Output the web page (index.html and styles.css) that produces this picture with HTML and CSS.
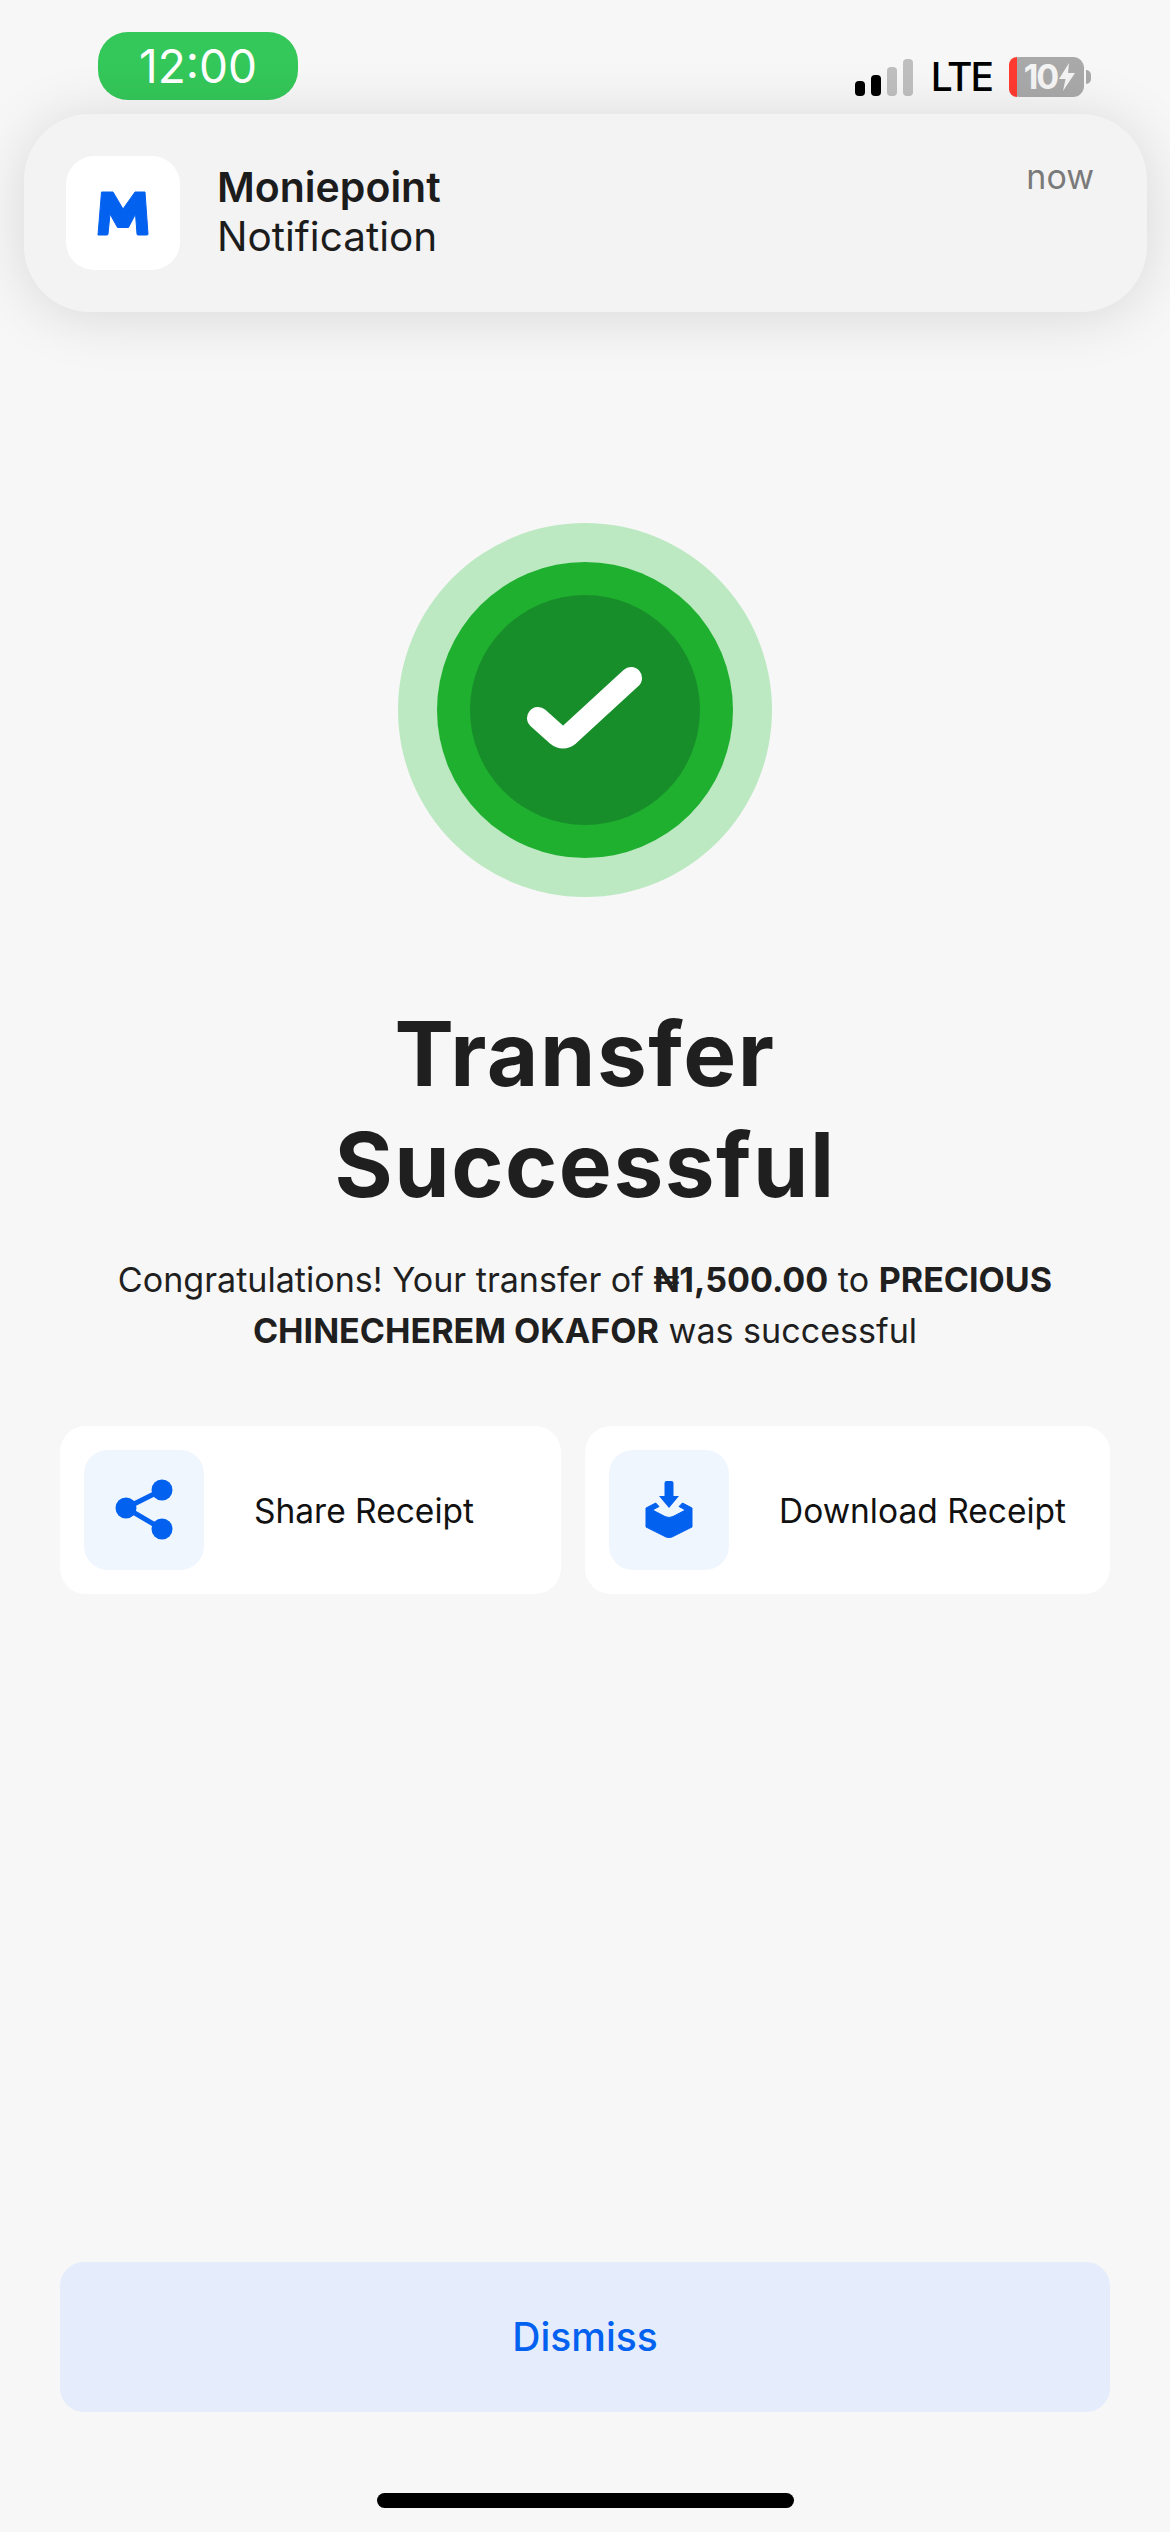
FILE: index.html
```html
<!DOCTYPE html>
<html lang="en">
<head>
    <meta charset="UTF-8">
    <meta name="viewport" content="width=device-width, initial-scale=1.0">
    <title>Transfer Successful</title>
    <link rel="stylesheet" href="styles.css">
</head>
<body>
    <div class="screen">

        <div class="status">
            <div class="time">12:00</div>
            <div class="status-right">
                <div class="signal">
                    <span class="bar bar-1"></span>
                    <span class="bar bar-2"></span>
                    <span class="bar bar-3"></span>
                    <span class="bar bar-4"></span>
                </div>
                <div class="lte">LTE</div>
                <div class="battery">
                    <div class="battery-body">
                        <span class="battery-low"></span>
                        <span class="battery-num">10</span>
                        <svg class="battery-bolt" width="18" height="28" viewBox="0 0 18 28">
                            <path d="M11 0 L1 16 H7.5 L5 28 L17 10 H10 Z" fill="#f4f4f4"/>
                        </svg>
                    </div>
                    <span class="battery-nub"></span>
                </div>
            </div>
        </div>

        <div class="banner">
            <div class="app-icon">
                <svg width="52" height="45" viewBox="0 0 52 45">
                    <path d="M4.5 1 H16 L26 18 L38 1 H48 L51 43 Q51 44 50 44 H41 Q40 44 40 43 L38.500 23 L31.500 36.500 H20.500 L13 23 L11 43 Q11 44 10 44 H1 Z" fill="#0361f0" stroke="#0361f0" stroke-width="1" stroke-linejoin="round"/>
                </svg>
            </div>
            <div class="banner-text">
                <div class="banner-title">Moniepoint</div>
                <div class="banner-sub">Notification</div>
            </div>
            <div class="banner-time">now</div>
        </div>

        <div class="content">
            <div class="ring-outer">
                <div class="ring-mid">
                    <div class="ring-inner">
                        <svg width="120" height="100" viewBox="0 0 120 100">
                            <path d="M13 58 L32 75 Q38 80 44 75 L106 18" fill="none" stroke="#fff" stroke-width="22" stroke-linecap="round" stroke-linejoin="round"/>
                        </svg>
                    </div>
                </div>
            </div>

            <h1 class="heading">Transfer<br>Successful</h1>

            <p class="message">Congratulations! Your transfer of <b>₦1,500.00</b> to <b>PRECIOUS<br>CHINECHEREM OKAFOR</b> was successful</p>

            <div class="actions">
                <div class="action">
                    <div class="action-icon">
                        <svg width="58" height="62" viewBox="0 0 58 62">
                            <path d="M47 11 L11 29 L47 50" fill="none" stroke="#0361f0" stroke-width="5"/>
                            <circle cx="47" cy="11" r="10.500" fill="#0361f0"/>
                            <circle cx="11" cy="29" r="10.500" fill="#0361f0"/>
                            <circle cx="47" cy="50" r="10.500" fill="#0361f0"/>
                        </svg>
                    </div>
                    <span class="action-label">Share Receipt</span>
                </div>
                <div class="action">
                    <div class="action-icon">
                        <svg width="48" height="58" viewBox="0 0 48 58">
                            <path d="M19.500 2 Q19.500 0 21.500 0 H26.500 Q28.500 0 28.500 2 V15 H34 L24 27 L14 15 H19.500 Z" fill="#0361f0"/>
                            <path d="M1 27 L10.700 22 L14 25.500 L7.500 29 L20 35.500 Q24 37.500 28 35.500 L40.500 29 L34 25.500 L37.500 22 L47 27 V46 L27 56 Q24 57 21 56 L1 46 Z" fill="#0361f0" stroke="#0361f0" stroke-width="1" stroke-linejoin="round"/>
                        </svg>
                    </div>
                    <span class="action-label">Download Receipt</span>
                </div>
            </div>
        </div>

        <div class="footer">
            <div class="dismiss">Dismiss</div>
            <div class="home-bar"></div>
        </div>

    </div>
</body>
</html>
```

FILE: styles.css
```css
body, div, h1, p {
  margin: 0;
  padding: 0;
}

body {
  background: #f7f7f7;
  font-family: Inter, "Noto Sans", sans-serif;
  color: #1f1f1f;
}

.screen {
  position: relative;
  width: 1170px;
  height: 2532px;
  display: flex;
  flex-direction: column;
  overflow: hidden;
}

/* status bar */
.status {
  display: flex;
  justify-content: space-between;
  align-items: flex-start;
  height: 100px;
  padding: 32px 79px 0 98px;
  box-sizing: border-box;
}

.time {
  width: 200px;
  height: 68px;
  background: #34c759;
  border-radius: 30px;
  color: #fff;
  font-size: 46px;
  line-height: 68px;
  text-align: center;
}

.status-right {
  display: flex;
  align-items: center;
  margin-top: 25px;
}

.signal {
  display: flex;
  align-items: flex-end;
  gap: 6px;
  height: 38px;
  margin-right: 18px;
}

.bar {
  width: 10px;
  border-radius: 4px;
  background: #000;
}

.bar-1 {
  height: 15px;
}

.bar-2 {
  height: 21px;
}

.bar-3 {
  height: 29px;
  background: #bfbfbf;
}

.bar-4 {
  height: 37px;
  background: #bfbfbf;
}

.lte {
  color: #000;
  font-size: 39px;
  font-weight: 500;
  line-height: 40px;
  letter-spacing: -2px;
  margin-right: 17px;
}

.battery {
  display: flex;
  align-items: center;
  gap: 2px;
}

.battery-body {
  position: relative;
  display: flex;
  align-items: center;
  justify-content: center;
  gap: 1px;
  width: 75px;
  height: 40px;
  padding-left: 7px;
  box-sizing: border-box;
  background: #a9a9a9;
  border-radius: 11px;
}

.battery-low {
  position: absolute;
  left: 0;
  top: 0;
  width: 8px;
  height: 40px;
  background: #ff3b30;
  border-radius: 11px 0 0 11px;
}

.battery-num {
  color: #f4f4f4;
  font-size: 34px;
  font-weight: 700;
  line-height: 40px;
  letter-spacing: -2px;
}

.battery-nub {
  width: 5px;
  height: 14px;
  background: #a9a9a9;
  border-radius: 0 5px 5px 0;
}

/* notification banner, lies over the page */
.banner {
  position: absolute;
  left: 24px;
  top: 114px;
  width: 1123px;
  height: 198px;
  display: flex;
  align-items: center;
  padding: 0 53px 0 42px;
  box-sizing: border-box;
  background: #f3f3f3;
  border-radius: 66px;
  box-shadow: 0 4px 60px rgba(0, 0, 0, 0.13);
}

.app-icon {
  display: flex;
  align-items: center;
  justify-content: center;
  flex: none;
  width: 114px;
  height: 114px;
  background: #fff;
  border-radius: 28px;
}

.banner-text {
  flex: 1;
  margin: -3px 0 0 37px;
  color: #1c1c1c;
  font-size: 40.500px;
  line-height: 50px;
}

.banner-title {
  font-size: 41px;
  font-weight: 600;
}

.banner-time {
  align-self: flex-start;
  margin-top: 41px;
  color: #7a7a7a;
  font-size: 34px;
  line-height: 44px;
}

/* main */
.content {
  flex: 1;
  display: flex;
  flex-direction: column;
  align-items: center;
  padding-top: 423px;
}

.ring-outer,
.ring-mid,
.ring-inner {
  display: flex;
  align-items: center;
  justify-content: center;
  border-radius: 50%;
}

.ring-outer {
  width: 374px;
  height: 374px;
  background: #bce9c2;
}

.ring-mid {
  width: 296px;
  height: 296px;
  background: #1fb02f;
}

.ring-inner {
  width: 230px;
  height: 230px;
  background: #188e2b;
}

.heading {
  margin-top: 101px;
  font-size: 89px;
  font-weight: 700;
  line-height: 111px;
  letter-spacing: 1.500px;
  text-align: center;
}

.message {
  margin-top: 34px;
  font-size: 34.100px;
  line-height: 51px;
  text-align: center;
}

.message b {
  font-weight: 700;
}

.actions {
  display: grid;
  grid-template-columns: 501px 525px;
  gap: 24px;
  margin-top: 70px;
}

.action {
  display: flex;
  align-items: center;
  gap: 50px;
  height: 168px;
  padding-left: 24px;
  background: #fff;
  border-radius: 26px;
}

.action-icon {
  display: flex;
  align-items: center;
  justify-content: center;
  flex: none;
  width: 120px;
  height: 120px;
  background: #f0f6fe;
  border-radius: 24px;
}

.action-label {
  margin-top: 2px;
  color: #111;
  font-size: 33.500px;
}

/* bottom */
.footer {
  display: flex;
  flex-direction: column;
  align-items: center;
  padding-bottom: 24px;
}

.dismiss {
  width: 1050px;
  height: 150px;
  background: #e5edfc;
  border-radius: 24px;
  color: #0361f0;
  font-size: 39px;
  font-weight: 500;
  line-height: 150px;
  text-align: center;
}

.home-bar {
  width: 417px;
  height: 15px;
  margin-top: 81px;
  background: #000;
  border-radius: 8px;
}
```
